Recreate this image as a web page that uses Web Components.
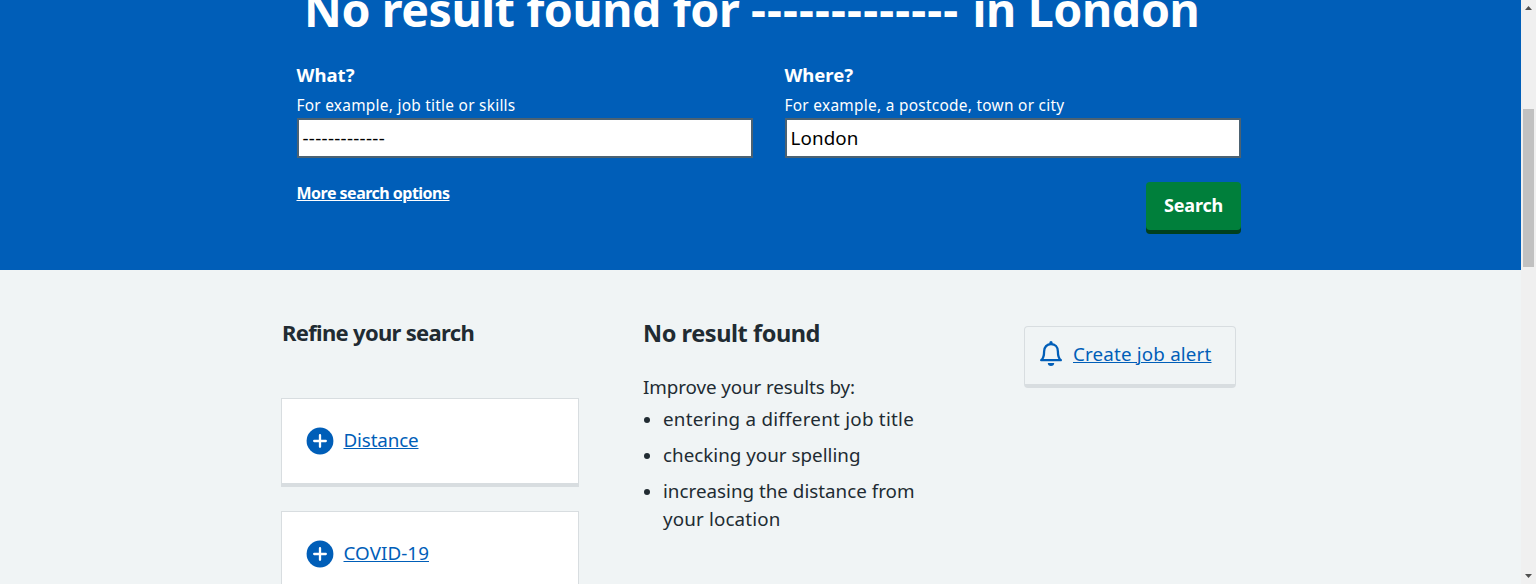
<!DOCTYPE html>
<html lang="en">
<head>
<meta charset="utf-8">
<title>Job search results</title>
<style>
html,body{margin:0;height:100%;overflow:hidden}
body{font-family:"Noto Sans","Open Sans",sans-serif;background:#f0f4f5;color:#212b32}
</style>
</head>
<body>
<job-page></job-page>
<script>
const define = (name, html, connected) => {
  const tpl = document.createElement('template');
  tpl.innerHTML = html;
  customElements.define(name, class extends HTMLElement {
    connectedCallback() {
      if (this.shadowRoot) return;
      this.attachShadow({mode: 'open'}).append(tpl.content.cloneNode(true));
      if (connected) connected.call(this, this.shadowRoot);
    }
  });
};

/* A single line of text tracked to a set measure */
define('text-line', `<style>
:host{display:block;white-space:pre}
span{display:inline-block;vertical-align:top}
:host([link]) span{text-decoration:underline;text-decoration-thickness:1px;text-underline-offset:1px}
</style><span><slot></slot></span>`, function (root) {
  const span = root.querySelector('span');
  const fit = () => {
    const natural = span.getBoundingClientRect().width;
    const count = this.textContent.length;
    if (natural) span.style.letterSpacing = ((+this.getAttribute('measure') - natural) / count) + 'px';
  };
  requestAnimationFrame(fit);
});

define('search-field', `<style>
:host{display:block;width:456px;color:#fff}
.label{font-size:18.5px;font-weight:700;line-height:28px}
.hint{font-size:15.4px;line-height:24px;margin-top:5px}
.input{box-sizing:border-box;height:40px;border:2px solid #4c6272;background:#fff;color:#000;padding-left:4px;font-size:18.8px;line-height:36px}
</style>
<div class="label"><slot name="label"></slot></div>
<div class="hint"><slot name="hint"></slot></div>
<div class="input"><slot></slot></div>`);

define('search-button', `<style>
:host{display:block;box-sizing:border-box;width:95px;height:48px;padding:9px 0 0 18px;border-radius:4px;background:#007f3b;box-shadow:0 4px 0 #00401e;color:#fff;font-size:18px;font-weight:700;line-height:28px}
</style><slot></slot>`);

define('search-hero', `<style>
:host{display:block;height:270px;background:#005eb8;color:#fff;overflow:hidden}
.title{display:flex;margin:-19px 0 0 304px;font-size:46.5px;line-height:56px;font-weight:700}
.fields{display:flex;gap:32px;margin:24px 0 0 297px}
.fields text-line{margin-left:-.5px}
.actions{display:flex;justify-content:space-between;align-items:flex-start;width:944px;margin:23px 0 0 297px}
.more{font-size:16px;line-height:24px;font-weight:700;margin-left:-.5px}
search-button{margin-top:1px}
</style>
<div class="title"><text-line measure="447">No result found for </text-line><text-line measure="221.5">------------- </text-line><text-line measure="227">in London</text-line></div>
<div class="fields">
<search-field><text-line slot="label" measure="58">What?</text-line><text-line slot="hint" measure="219">For example, job title or skills</text-line><text-line measure="82.5">-------------</text-line></search-field>
<search-field><text-line slot="label" measure="68.5">Where?</text-line><text-line slot="hint" measure="280">For example, a postcode, town or city</text-line><text-line measure="68">London</text-line></search-field>
</div>
<div class="actions"><text-line class="more" link measure="153">More search options</text-line><search-button><text-line measure="59">Search</text-line></search-button></div>`);

define('filter-card', `<style>
:host{display:flex;box-sizing:border-box;width:298px;height:89px;padding:27px 0 0 24px;gap:9.5px;border:1px solid #d8dde0;border-bottom-width:4px;background:#fff;color:#005eb8;font-size:18.8px;line-height:28px}
svg{display:block;flex:none;margin-top:1px}
</style>
<svg width="28" height="28" viewBox="0 0 28 28"><circle cx="14" cy="14" r="13.4" fill="#005eb8"/><path d="M14 8.2v11.6M8.2 14h11.6" stroke="#fff" stroke-width="2.3" stroke-linecap="round"/></svg>
<slot></slot>`);

define('alert-card', `<style>
:host{display:flex;box-sizing:border-box;width:212px;height:62px;padding:13px 0 0 15px;gap:11px;border:1px solid #d8dde0;border-bottom-width:4px;border-radius:4px;color:#005eb8;font-size:18.8px;line-height:28px}
svg{display:block;flex:none;margin-top:1px}
</style>
<svg width="22" height="26" viewBox="0 0 22 26"><path d="M1.2 19.2C3.8 17 4.1 13.8 4.1 10.4C4.1 6 7 3.1 11 3.1s6.9 2.9 6.9 7.3c0 3.4.3 6.6 2.9 8.8z" fill="none" stroke="#005eb8" stroke-width="2.3" stroke-linejoin="round"/><path d="M9.4 3V1.6a1.6 1.6 0 0 1 3.2 0V3zM7.8 22h6.4a3.2 3 0 0 1-6.4 0z" fill="#005eb8"/></svg>
<slot></slot>`);

define('bullet-item', `<style>
:host{display:flex;gap:13px;margin-bottom:8px}
i{width:6px;height:6px;margin:12px 0 0 1px;border-radius:50%;background:currentColor}
</style><i></i><div><slot></slot></div>`);

define('page-scrollbar', `<style>
:host{display:flex;flex-direction:column;align-items:center;box-sizing:border-box;width:15px;height:584px;padding:6px 0;background:#f0f0f0}
svg{display:block;flex:none}
.thumb{width:11px;height:158px;margin:99px 0 auto;background:#c1c1c1}
</style>
<svg width="7" height="4" viewBox="0 0 7 4"><path d="M0 4L3.5 0L7 4z" fill="#505050"/></svg>
<div class="thumb"></div>
<svg width="7" height="4" viewBox="0 0 7 4"><path d="M0 0L3.5 4L7 0z" fill="#505050"/></svg>`);

define('job-page', `<style>
:host{display:flex;height:584px;overflow:hidden}
main{width:1521px;height:584px;overflow:hidden}
.content{display:grid;grid-template-columns:298px 317px 212px;column-gap:64px;margin-left:281px;align-items:start}
aside{padding-top:46px}
.refine{margin-left:1px;font-size:22px;line-height:32px;font-weight:700}
filter-card{margin-bottom:24px}
filter-card.first{margin-top:50px}
.results{padding-top:47px;font-size:18.8px;line-height:28px}
.none{font-size:23.5px;line-height:32px;font-weight:700;margin:0 0 24px}
.intro{margin-bottom:4px}
alert-card{margin-top:56px}
</style>
<main>
<search-hero></search-hero>
<div class="content">
<aside>
<text-line class="refine" measure="192">Refine your search</text-line>
<filter-card class="first"><text-line link measure="75">Distance</text-line></filter-card>
<filter-card><text-line link measure="85.5">COVID-19</text-line></filter-card>
</aside>
<section class="results">
<text-line class="none" measure="177">No result found</text-line>
<text-line class="intro" measure="212">Improve your results by:</text-line>
<bullet-item><text-line measure="251">entering a different job title</text-line></bullet-item>
<bullet-item><text-line measure="197.5">checking your spelling</text-line></bullet-item>
<bullet-item><text-line measure="251.5">increasing the distance from</text-line><text-line measure="117.5">your location</text-line></bullet-item>
</section>
<alert-card><text-line link measure="138.5">Create job alert</text-line></alert-card>
</div>
</main>
<page-scrollbar></page-scrollbar>`);
</script>
</body>
</html>
